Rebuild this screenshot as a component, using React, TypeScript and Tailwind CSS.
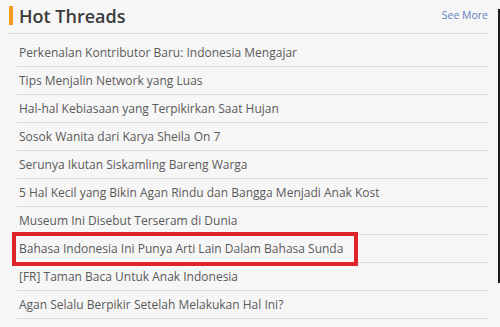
const threads = [
  'Perkenalan Kontributor Baru: Indonesia Mengajar',
  'Tips Menjalin Network yang Luas',
  'Hal-hal Kebiasaan yang Terpikirkan Saat Hujan',
  'Sosok Wanita dari Karya Sheila On 7',
  'Serunya Ikutan Siskamling Bareng Warga',
  '5 Hal Kecil yang Bikin Agan Rindu dan Bangga Menjadi Anak Kost',
  'Museum Ini Disebut Terseram di Dunia',
  'Bahasa Indonesia Ini Punya Arti Lain Dalam Bahasa Sunda',
  '[FR] Taman Baca Untuk Anak Indonesia',
  'Agan Selalu Berpikir Setelah Melakukan Hal Ini?',
];

export default function App() {
  return (
    <div
      className="relative w-[500px] h-[327px] overflow-hidden bg-[#f6f6f6]"
      style={{ fontFamily: '"Open Sans", "Noto Sans", sans-serif' }}
    >
      {/* dark edge of the neighbouring column */}
      <div className="absolute right-0 top-[9px] w-[2px] h-[274px] bg-[#1c1a18]" />

      <div className="pl-[9px] pr-[12px]">
        <div className="flex items-center h-[34px] border-b border-[#d9d9d9]">
          <span className="w-[4px] h-[19px] bg-[#f39a1e] -mt-[2px]" />
          <h2 className="ml-[6px] -mt-[2px] text-[18px] leading-none font-semibold text-[#3a3a3a]">
            Hot Threads
          </h2>
          <a className="ml-auto text-[10.5px] text-[#5f85b8] -mt-[1px]">See More</a>
        </div>

        <ul className="ml-[8px] pt-[5px]">
          {threads.map((t) => (
            <li
              key={t}
              className="h-[28px] flex items-center pl-[2px] border-b border-[#dcdcdc] text-[12px] text-[#5a5a5a] whitespace-nowrap"
            >
              {t}
            </li>
          ))}
        </ul>
      </div>

      {/* highlight around the 8th thread */}
      <div className="absolute left-[12px] top-[232px] w-[346px] h-[34px] border-[4px] border-[#e0222b]" />
    </div>
  );
}
